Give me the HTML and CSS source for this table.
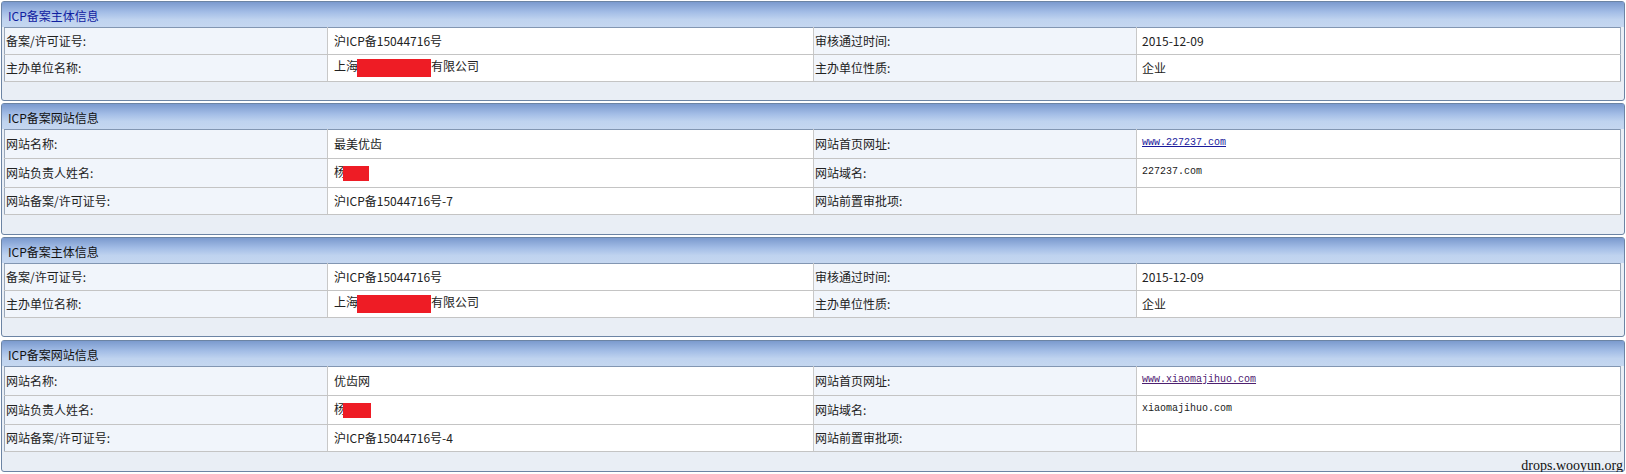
FILE: index.html
```html
<!DOCTYPE html>
<html lang="zh-CN">
<head>
<meta charset="utf-8">
<title>ICP备案信息</title>
<link rel="stylesheet" href="styles.css">
</head>
<body>
<div class="page">
  <section class="panel">
    <div class="panel-head title-blue">ICP备案主体信息</div>
    <table class="info">
      <colgroup><col class="c-lab1"><col class="c-val1"><col class="c-lab2"><col class="c-val2"></colgroup>
      <tr>
        <td class="lab">备案/许可证号:</td>
        <td class="val">沪ICP备15044716号</td>
        <td class="lab">审核通过时间:</td>
        <td class="val val2">2015-12-09</td>
      </tr>
      <tr>
        <td class="lab">主办单位名称:</td>
        <td class="val">上海<span class="redact big"></span>有限公司</td>
        <td class="lab">主办单位性质:</td>
        <td class="val val2">企业</td>
      </tr>
    </table>
    <div class="panel-foot"></div>
  </section>

  <section class="panel site">
    <div class="panel-head">ICP备案网站信息</div>
    <table class="info">
      <colgroup><col class="c-lab1"><col class="c-val1"><col class="c-lab2"><col class="c-val2"></colgroup>
      <tr class="tall">
        <td class="lab">网站名称:</td>
        <td class="val">最美优齿</td>
        <td class="lab">网站首页网址:</td>
        <td class="val val2 top"><a class="mono link" href="#">www.227237.com</a></td>
      </tr>
      <tr class="tall">
        <td class="lab">网站负责人姓名:</td>
        <td class="val">杨<span class="redact small"></span></td>
        <td class="lab">网站域名:</td>
        <td class="val val2 top"><span class="mono">227237.com</span></td>
      </tr>
      <tr>
        <td class="lab">网站备案/许可证号:</td>
        <td class="val">沪ICP备15044716号-7</td>
        <td class="lab">网站前置审批项:</td>
        <td class="val val2"></td>
      </tr>
    </table>
    <div class="panel-foot"></div>
  </section>

  <section class="panel">
    <div class="panel-head">ICP备案主体信息</div>
    <table class="info">
      <colgroup><col class="c-lab1"><col class="c-val1"><col class="c-lab2"><col class="c-val2"></colgroup>
      <tr>
        <td class="lab">备案/许可证号:</td>
        <td class="val">沪ICP备15044716号</td>
        <td class="lab">审核通过时间:</td>
        <td class="val val2">2015-12-09</td>
      </tr>
      <tr>
        <td class="lab">主办单位名称:</td>
        <td class="val">上海<span class="redact big"></span>有限公司</td>
        <td class="lab">主办单位性质:</td>
        <td class="val val2">企业</td>
      </tr>
    </table>
    <div class="panel-foot"></div>
  </section>

  <section class="panel site last">
    <div class="panel-head">ICP备案网站信息</div>
    <table class="info">
      <colgroup><col class="c-lab1"><col class="c-val1"><col class="c-lab2"><col class="c-val2"></colgroup>
      <tr class="tall">
        <td class="lab">网站名称:</td>
        <td class="val">优齿网</td>
        <td class="lab">网站首页网址:</td>
        <td class="val val2 top"><a class="mono link visited" href="#">www.xiaomajihuo.com</a></td>
      </tr>
      <tr class="tall">
        <td class="lab">网站负责人姓名:</td>
        <td class="val">杨<span class="redact small wide"></span></td>
        <td class="lab">网站域名:</td>
        <td class="val val2 top"><span class="mono">xiaomajihuo.com</span></td>
      </tr>
      <tr>
        <td class="lab">网站备案/许可证号:</td>
        <td class="val">沪ICP备15044716号-4</td>
        <td class="lab">网站前置审批项:</td>
        <td class="val val2"></td>
      </tr>
    </table>
    <div class="panel-foot"></div>
    <span class="watermark">drops.wooyun.org</span>
  </section>
</div>
</body>
</html>
```

FILE: styles.css
```css
html, body {
  margin: 0;
  padding: 0;
  background: #ffffff;
}

body {
  font-family: "Noto Sans CJK SC", "Liberation Sans", sans-serif;
  font-size: 12px;
  line-height: 14px;
  color: #222222;
}

.page {
  display: flex;
  flex-direction: column;
  gap: 2px;
  padding: 1px 1px 0 1px;
}

.panel {
  position: relative;
  width: 1624px;
  box-sizing: border-box;
  border: 1px solid #6c84a4;
  border-radius: 3px;
  background: #e9eef5;
  padding: 0 2px;
}

.panel.last {
  margin-top: 1px;
}

.panel-head {
  margin: 0 -2px;
  height: 25px;
  line-height: 27px;
  padding-left: 6px;
  background: linear-gradient(#7b9ace 0%, #a3bde6 40%, #bfd3ef 70%, #c5d7f0 100%);
  color: #111111;
  font-size: 12px;
}

.title-blue {
  color: #1020a0;
}

.info {
  width: 1617px;
  table-layout: fixed;
  border-collapse: collapse;
  border-top: 1px solid #8296b2;
  border-left: 1px solid #9aa8ba;
  border-right: 1px solid #9aa8ba;
}

.c-lab1 { width: 323px; }
.c-val1 { width: 486px; }
.c-lab2 { width: 323px; }
.c-val2 { width: 484px; }

.info td {
  height: 26px;
  padding: 0;
  line-height: 14px;
  border-bottom: 1px solid #c4c4c4;
  vertical-align: middle;
  white-space: nowrap;
  overflow: hidden;
}

.info tr.tall td {
  height: 28px;
}

.info td.lab {
  background: #f1f5fb;
  padding-left: 1px;
  border-right: 1px solid #c8c8c8;
}

.info td.val {
  background: #ffffff;
  padding-left: 6px;
  border-right: 1px solid #c8c8c8;
}

.info td.val2 {
  padding-left: 5px;
  border-right: none;
}

.info tr.tall td.top {
  vertical-align: top;
  height: 25px;
  padding-top: 3px;
}

.mono {
  font-family: "Liberation Mono", monospace;
  font-size: 10px;
  line-height: 12px;
  color: #222222;
}

.link {
  color: #1a1a9c;
  text-decoration: underline;
}

.link.visited {
  color: #4d2070;
}

.redact {
  display: inline-block;
  background: #ee1c25;
  vertical-align: middle;
}

.redact.big {
  width: 74px;
  height: 18px;
  margin-left: -1px;
}

.redact.small {
  width: 26px;
  height: 15px;
  margin-left: -3px;
}

.redact.small.wide {
  width: 28px;
}

.panel-foot {
  height: 18px;
}

.site .panel-foot {
  height: 19px;
}

.watermark {
  position: absolute;
  right: 1px;
  bottom: -2px;
  font-family: "Liberation Serif", serif;
  font-size: 14px;
  line-height: 14px;
  color: #111111;
}
```
